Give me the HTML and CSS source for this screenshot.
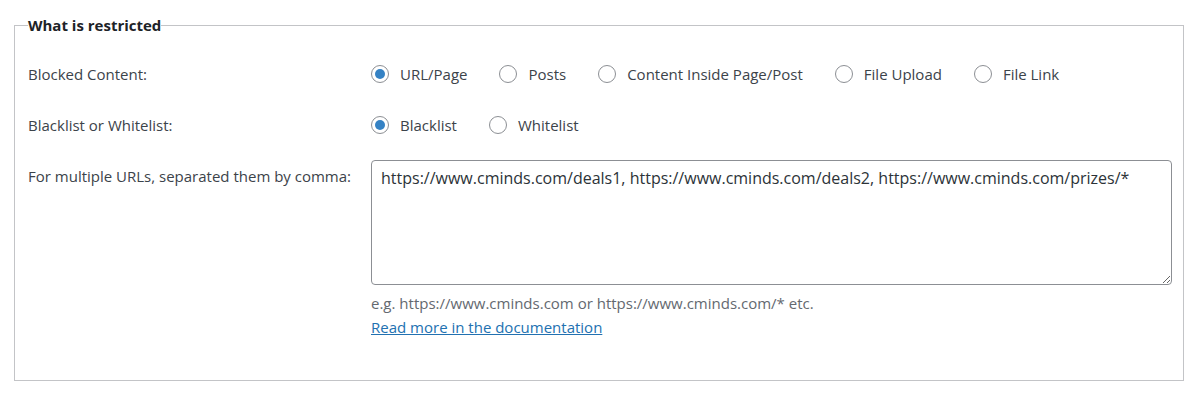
FILE: index.html
```html
<!DOCTYPE html>
<html>
<head>
	<title>What is restricted</title>
	<link rel="stylesheet" href="styles.css">
</head>
<body>
	<fieldset class="box">
		<legend>What is restricted</legend>
		<div class="row">
			<div class="label">Blocked Content:</div>
			<div class="field radios">
				<label class="opt"><input type="radio" name="blocked" checked> URL/Page</label>
				<label class="opt"><input type="radio" name="blocked"> Posts</label>
				<label class="opt"><input type="radio" name="blocked"> Content Inside Page/Post</label>
				<label class="opt"><input type="radio" name="blocked"> File Upload</label>
				<label class="opt"><input type="radio" name="blocked"> File Link</label>
			</div>
		</div>
		<div class="row">
			<div class="label">Blacklist or Whitelist:</div>
			<div class="field radios">
				<label class="opt"><input type="radio" name="mode" checked> Blacklist</label>
				<label class="opt"><input type="radio" name="mode"> Whitelist</label>
			</div>
		</div>
		<div class="row">
			<div class="label">For multiple URLs, separated them by comma:</div>
			<div class="field">
				<textarea class="urls">https://www.cminds.com/deals1, https://www.cminds.com/deals2, https://www.cminds.com/prizes/*</textarea>
				<p class="desc">e.g. https://www.cminds.com or https://www.cminds.com/* etc.</p>
				<a class="doc" href="#">Read more in the documentation</a>
			</div>
		</div>
	</fieldset>
</body>
</html>
```

FILE: styles.css
```css
body {
    margin: 0;
    padding: 0 16px 0 14px;
    background: #fff;
    font-family: "Open Sans", Arial, sans-serif;
    font-size: 15px;
    color: #3c434a;
}

.box {
    margin: 15px 0 0 0;
    padding: 14px 12px 28px 13px;
    border: 1px solid #c3c4c7;
    min-width: 0;
}

.box legend {
    padding: 0;
    font-weight: 700;
    color: #1d2327;
    font-size: 15px;
}

.row {
    display: grid;
    grid-template-columns: 343px 1fr;
    align-items: start;
    padding: 13px 0 14px;
}

.label {
    line-height: 20px;
    padding-top: 2px;
}

.radios {
    display: flex;
    gap: 32px;
    line-height: 24px;
}

.opt {
    display: flex;
    align-items: center;
    gap: 11px;
}

input[type="radio"] {
    appearance: none;
    width: 18px;
    height: 18px;
    margin: 0;
    border: 1px solid #8c8f94;
    border-radius: 50%;
    background: #fff;
    display: grid;
    place-items: center;
}

input[type="radio"]:checked::before {
    content: "";
    width: 10px;
    height: 10px;
    border-radius: 50%;
    background: #3582c4;
}

.urls {
    display: block;
    box-sizing: border-box;
    width: 801px;
    height: 125px;
    margin: -4px 0 0;
    padding: 6px 9px;
    border: 1px solid #8c8f94;
    border-radius: 4px;
    font-family: inherit;
    font-size: 16px;
    line-height: 22px;
    color: #2c3338;
    resize: vertical;
}

.desc {
    margin: 7px 0 2px;
    color: #646970;
    line-height: 22px;
}

.doc {
    color: #2271b1;
    line-height: 22px;
}
```
